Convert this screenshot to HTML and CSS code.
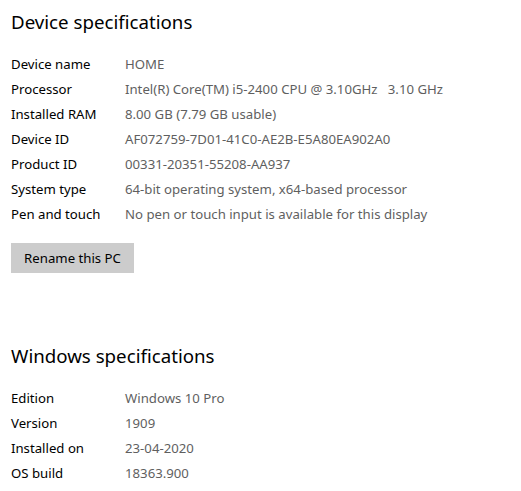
FILE: index.html
```html
<!DOCTYPE html>
<html>
<head>
<meta charset="utf-8">
<link rel="stylesheet" href="styles.css">
</head>
<body>
<div class="page">
  <section class="section">
    <h2 class="title">Device specifications</h2>
    <div class="specs">
      <div class="row"><span class="label">Device name</span><span class="value">HOME</span></div>
      <div class="row"><span class="label">Processor</span><span class="value">Intel(R) Core(TM) i5-2400 CPU @ 3.10GHz&nbsp;&nbsp;&nbsp;3.10 GHz</span></div>
      <div class="row"><span class="label">Installed RAM</span><span class="value">8.00 GB (7.79 GB usable)</span></div>
      <div class="row"><span class="label">Device ID</span><span class="value">AF072759-7D01-41C0-AE2B-E5A80EA902A0</span></div>
      <div class="row"><span class="label">Product ID</span><span class="value">00331-20351-55208-AA937</span></div>
      <div class="row"><span class="label">System type</span><span class="value">64-bit operating system, x64-based processor</span></div>
      <div class="row"><span class="label">Pen and touch</span><span class="value">No pen or touch input is available for this display</span></div>
    </div>
    <button class="btn">Rename this PC</button>
  </section>
  <section class="section second">
    <h2 class="title">Windows specifications</h2>
    <div class="specs">
      <div class="row"><span class="label">Edition</span><span class="value">Windows 10 Pro</span></div>
      <div class="row"><span class="label">Version</span><span class="value">1909</span></div>
      <div class="row"><span class="label">Installed on</span><span class="value">23-04-2020</span></div>
      <div class="row"><span class="label">OS build</span><span class="value">18363.900</span></div>
    </div>
  </section>
</div>
</body>
</html>
```
FILE: styles.css
```css
html, body {
  margin: 0;
  padding: 0;
  background: #ffffff;
}
body {
  font-family: "Noto Sans", "Open Sans", sans-serif;
  color: #000000;
  width: 521px;
  height: 491px;
  overflow: hidden;
}
.page {
  padding: 7px 11px 0 11px;
}
.title {
  margin: 0;
  font-weight: 400;
  font-size: 18.7px;
  line-height: 30px;
  color: #000;
}
.specs {
  margin-top: 14px;
  display: flex;
  flex-direction: column;
}
.row {
  display: flex;
  height: 25px;
  align-items: center;
  font-size: 13.2px;
}
.label {
  width: 114px;
  flex: none;
  color: #000;
}
.value {
  color: #5f5f5f;
  white-space: pre;
}
.btn {
  margin-top: 17px;
  width: 123px;
  height: 30px;
  border: none;
  background: #cccccc;
  font-family: inherit;
  font-size: 13.2px;
  color: #000;
  padding: 0;
}
.second {
  margin-top: 68px;
}
```
